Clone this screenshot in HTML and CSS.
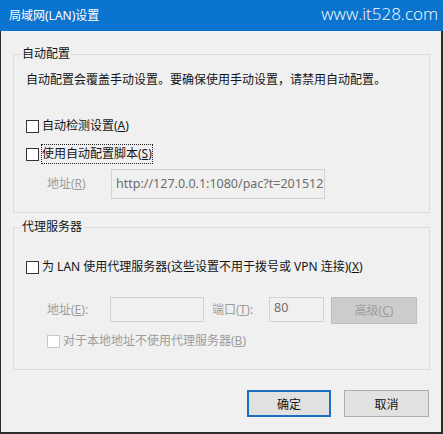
FILE: index.html
```html
<!DOCTYPE html>
<html lang="zh-CN">
<head>
<meta charset="utf-8">
<title>局域网(LAN)设置</title>
<link rel="stylesheet" href="styles.css">
</head>
<body>
<div class="window">
  <div class="titlebar">
    <span class="title">局域网(LAN)设置</span>
    <span class="watermark">www.it528.com</span>
  </div>
  <div class="client">
    <fieldset class="group group-auto">
      <legend>自动配置</legend>
      <p class="desc">自动配置会覆盖手动设置。要确保使用手动设置，请禁用自动配置。</p>
      <div class="check row-detect"><span class="box"></span><span class="label">自动检测设置(<u>A</u>)</span></div>
      <div class="check row-script"><span class="box"></span><span class="label focus">使用自动配置脚本(<u>S</u>)</span></div>
      <div class="field-row row-url">
        <span class="dim lbl-url">地址(<u>R</u>)</span>
        <div class="textbox url">http://127.0.0.1:1080/pac?t=201512</div>
      </div>
    </fieldset>
    <fieldset class="group group-proxy">
      <legend>代理服务器</legend>
      <div class="check row-proxy"><span class="box"></span><span class="label">为 LAN 使用代理服务器(这些设置不用于拨号或 VPN 连接)(<u>X</u>)</span></div>
      <div class="field-row row-server">
        <span class="dim lbl-addr">地址(<u>E</u>):</span>
        <div class="textbox addr"></div>
        <span class="dim lbl-port">端口(<u>T</u>):</span>
        <div class="textbox port">80</div>
        <div class="btn btn-disabled">高级(<u>C</u>)</div>
      </div>
      <div class="check row-local disabled"><span class="box"></span><span class="label">对于本地地址不使用代理服务器(<u>B</u>)</span></div>
    </fieldset>
    <div class="actions">
      <button class="btn btn-default" type="button">确定</button>
      <button class="btn btn-cancel" type="button">取消</button>
    </div>
  </div>
</div>
</body>
</html>
```

FILE: styles.css
```css
html, body {
  margin: 0;
  padding: 0;
  background: #f0f0f0;
}

body {
  font-family: "Noto Sans", "Noto Sans CJK SC", sans-serif;
  font-size: 12px;
  color: #141414;
}

.window {
  width: 443px;
  height: 434px;
  display: flex;
  flex-direction: column;
}

.titlebar {
  height: 31px;
  flex: none;
  background: #0b74cf;
  color: #fff;
  display: flex;
  align-items: center;
  justify-content: space-between;
  padding: 0 5px 0 9px;
}

.title {
  font-size: 12px;
  line-height: 16px;
}

.watermark {
  font-family: "Open Sans", "Noto Sans", sans-serif;
  font-weight: 300;
  font-size: 17px;
  line-height: 20px;
  margin-top: -3px;
}

.client {
  flex: 1;
  border-left: 1px solid #2b2b2b;
  border-right: 2px solid #2b2b2b;
  border-bottom: 2px solid #2b2b2b;
  padding: 16px 11px 0 12px;
  background: #f0f0f0;
}

.group {
  margin: 0;
  padding: 0;
  border: 1px solid #dcdcdc;
  min-width: 0;
}

.group legend {
  margin-left: 7px;
  padding: 0 1px;
  font-size: 12px;
  line-height: 14px;
}

.group-auto {
  padding-bottom: 13px;
}

.group-proxy {
  margin-top: 7px;
  padding-bottom: 20px;
}

.desc {
  margin: 11px 0 0 12px;
  line-height: 16px;
}

.check {
  display: flex;
  align-items: center;
  height: 16px;
  margin-left: 12px;
  line-height: 16px;
}

.box {
  width: 13px;
  height: 13px;
  box-sizing: border-box;
  border: 1px solid #333;
  background: #fff;
  flex: none;
}

.label {
  margin-left: 2px;
  padding: 1px 0;
  border: 1px solid transparent;
  white-space: nowrap;
}

.label.focus {
  border: 1px dotted #222;
}

.row-detect {
  margin-top: 30px;
}

.row-script {
  margin-top: 12px;
}

.row-proxy {
  margin-top: 25px;
}

.row-local {
  margin-top: 9px;
  margin-left: 33px;
}

.disabled .box {
  border-color: #c8c8c8;
}

.disabled .label,
.dim {
  color: #9c9c9c;
}

.field-row {
  display: flex;
  align-items: center;
  margin-left: 33px;
  line-height: 16px;
}

.row-url {
  margin-top: 7px;
}

.lbl-url {
  width: 64px;
}

.textbox {
  box-sizing: border-box;
  border: 1px solid #d2d2d2;
  background: #f0f0f0;
  color: #6d6d6d;
  padding-left: 4px;
  white-space: nowrap;
  overflow: hidden;
  font-size: 12.5px;
}

.url {
  width: 214px;
  height: 30px;
  line-height: 27px;
}

.row-server {
  margin-top: 22px;
  align-items: flex-start;
  height: 27px;
}

.row-server .dim {
  margin-top: 5px;
}

.lbl-addr {
  width: 63px;
}

.addr {
  width: 94px;
  height: 25px;
}

.lbl-port {
  margin-left: 8px;
  width: 57px;
}

.port {
  width: 55px;
  height: 25px;
  line-height: 20px;
}

.btn {
  box-sizing: border-box;
  height: 27px;
  font-family: inherit;
  font-size: 12px;
  color: #141414;
  background: #e1e1e1;
  border: 1px solid #adadad;
  display: flex;
  align-items: center;
  justify-content: center;
  padding: 0;
  margin: 0;
}

.btn-disabled {
  margin-left: 7px;
  width: 86px;
  background: #cccccc;
  border-color: #bfbfbf;
  color: #9c9c9c;
}

.actions {
  display: flex;
  justify-content: flex-end;
  gap: 13px;
  margin-top: 20px;
  padding-right: 1px;
}

.btn-default {
  width: 84px;
  border: 2px solid #1c6fc0;
}

.btn-cancel {
  width: 85px;
}
```
